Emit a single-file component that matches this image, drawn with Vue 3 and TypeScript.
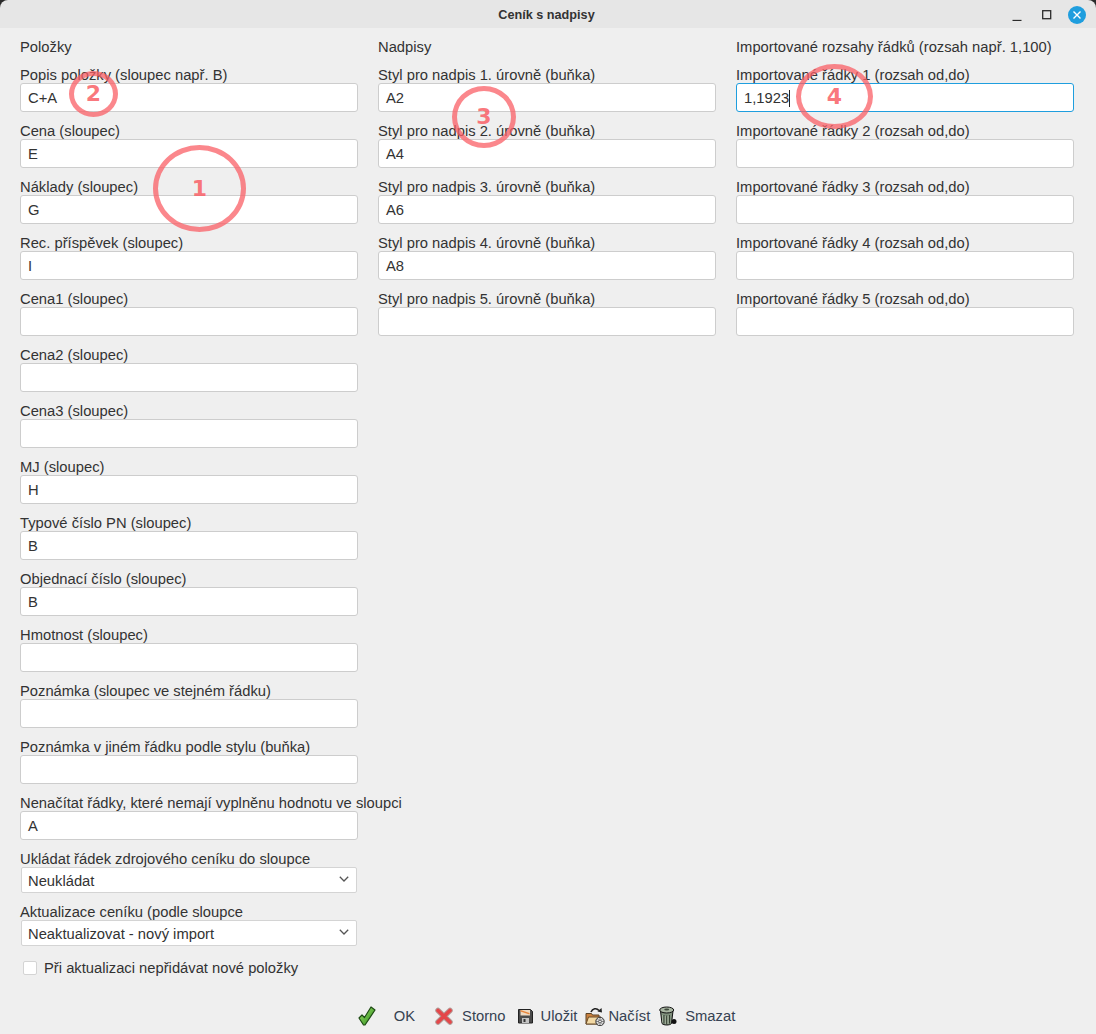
<script setup lang="ts">
const col1: [string, string][] = [
  ['Popis položky (sloupec např. B)', 'C+A'],
  ['Cena (sloupec)', 'E'],
  ['Náklady (sloupec)', 'G'],
  ['Rec. příspěvek (sloupec)', 'I'],
  ['Cena1 (sloupec)', ''],
  ['Cena2 (sloupec)', ''],
  ['Cena3 (sloupec)', ''],
  ['MJ (sloupec)', 'H'],
  ['Typové číslo PN (sloupec)', 'B'],
  ['Objednací číslo (sloupec)', 'B'],
  ['Hmotnost (sloupec)', ''],
  ['Poznámka (sloupec ve stejném řádku)', ''],
  ['Poznámka v jiném řádku podle stylu (buňka)', ''],
  ['Nenačítat řádky, které nemají vyplněnu hodnotu ve sloupci', 'A'],
]
const col2: [string, string][] = [
  ['Styl pro nadpis 1. úrovně (buňka)', 'A2'],
  ['Styl pro nadpis 2. úrovně (buňka)', 'A4'],
  ['Styl pro nadpis 3. úrovně (buňka)', 'A6'],
  ['Styl pro nadpis 4. úrovně (buňka)', 'A8'],
  ['Styl pro nadpis 5. úrovně (buňka)', ''],
]
const col3: [string, string][] = [
  ['Importované řádky 2 (rozsah od,do)', ''],
  ['Importované řádky 3 (rozsah od,do)', ''],
  ['Importované řádky 4 (rozsah od,do)', ''],
  ['Importované řádky 5 (rozsah od,do)', ''],
]
</script>

<template>
  <div class="window">
    <header class="titlebar">
      <span class="title">Ceník s nadpisy</span>
      <div class="controls">
        <svg class="min" width="12" height="12" viewBox="0 0 12 12"><path d="M1.500 11.500h9" stroke="#2b2b2b" stroke-width="1.300" /></svg>
        <svg width="12" height="12" viewBox="0 0 12 12"><rect x="1.700" y="1.700" width="8" height="8" fill="none" stroke="#2b2b2b" stroke-width="1.300" /></svg>
        <svg width="18" height="18" viewBox="0 0 18 18"><circle cx="9" cy="9" r="9" fill="#1f9ede" /><path d="M5.500 5.500l7 7M12.500 5.500l-7 7" stroke="#fff" stroke-width="1.400" /></svg>
      </div>
    </header>

    <main class="columns">
      <section class="col">
        <h2 class="head">Položky</h2>
        <div v-for="f in col1" :key="f[0]" class="field">
          <label class="label">{{ f[0] }}</label>
          <div class="input">{{ f[1] }}</div>
        </div>
        <div class="field sel-field">
          <label class="label">Ukládat řádek zdrojového ceníku do sloupce</label>
          <div class="select">
            <span>Neukládat</span>
            <svg width="10" height="6" viewBox="0 0 10 6"><path d="M.8.8L5 5l4.200-4.200" fill="none" stroke="#555" stroke-width="1.300" /></svg>
          </div>
        </div>
        <div class="field sel-field">
          <label class="label">Aktualizace ceníku (podle sloupce</label>
          <div class="select">
            <span>Neaktualizovat - nový import</span>
            <svg width="10" height="6" viewBox="0 0 10 6"><path d="M.8.8L5 5l4.200-4.200" fill="none" stroke="#555" stroke-width="1.300" /></svg>
          </div>
        </div>
        <div class="check">
          <span class="box"></span>
          <span>Při aktualizaci nepřidávat nové položky</span>
        </div>
      </section>

      <section class="col">
        <h2 class="head">Nadpisy</h2>
        <div v-for="f in col2" :key="f[0]" class="field">
          <label class="label">{{ f[0] }}</label>
          <div class="input">{{ f[1] }}</div>
        </div>
      </section>

      <section class="col">
        <h2 class="head">Importované rozsahy řádků (rozsah např. 1,100)</h2>
        <div class="field">
          <label class="label">Importované řádky 1 (rozsah od,do)</label>
          <div class="input focus">1,1923<i class="caret"></i></div>
        </div>
        <div v-for="f in col3" :key="f[0]" class="field">
          <label class="label">{{ f[0] }}</label>
          <div class="input">{{ f[1] }}</div>
        </div>
      </section>
    </main>

    <footer class="footer">
      <button class="btn b-ok">
        <svg class="ico" width="20" height="20" viewBox="0 0 20 20">
          <defs><linearGradient id="gk" x1="0" y1="0" x2="1" y2="1"><stop offset="0" stop-color="#a6e36e" /><stop offset="1" stop-color="#258a17" /></linearGradient></defs>
          <path d="M1 12l3-3 2.500 2.500L13 1l4 3L7 19h-1.500z" fill="url(#gk)" stroke="#1d4a14" stroke-width="1.200" stroke-linejoin="round" />
        </svg>
        <span>OK</span>
      </button>
      <button class="btn b-no">
        <svg class="ico" width="18" height="18" viewBox="0 0 18 18">
          <path d="M3 3.500l12 11.500M15 3.500L3 15" fill="none" stroke="#b49a96" stroke-width="5.500" stroke-linecap="round" />
          <path d="M3 3.500l12 11.500M15 3.500L3 15" fill="none" stroke="#e4474a" stroke-width="3.600" stroke-linecap="round" />
        </svg>
        <span>Storno</span>
      </button>
      <button class="btn b-save">
        <svg class="ico" width="15" height="16" viewBox="0 0 15 16">
          <path d="M.5 1.500h12l2 2v11.500H.5z" fill="#4b4b4b" stroke="#222" />
          <path d="M2.500 2h9.500v5.500H2.500z" fill="#ecd9c2" />
          <path d="M2.500 2l9 3v1.500l-9-3z" fill="#e8853a" />
          <path d="M4 10h7v5H4z" fill="#c4c4c4" />
          <path d="M5.500 11h2v3h-2z" fill="#333" />
        </svg>
        <span>Uložit</span>
      </button>
      <button class="btn b-load">
        <svg class="ico" width="20" height="20" viewBox="0 0 20 20">
          <path d="M1 7.500h5.500l1 1.500h6.500v9H1z" fill="#c9803e" stroke="#5a4326" />
          <path d="M1 18l2.500-7H16l-2 7z" fill="#f3d9a4" stroke="#6a4d2a" />
          <path d="M6 6c1.500-3.500 5.500-4.500 8-1.500" fill="none" stroke="#222" stroke-width="1.600" />
          <path d="M12.500 5.500l4.500 1-.5-4.500z" fill="#222" />
          <circle cx="15" cy="15.500" r="4.200" fill="#e6e6e6" stroke="#333" />
          <path d="M12.200 12.700l5.600 5.600M17.800 12.700l-5.600 5.600M15 11.500v8M11 15.500h8" stroke="#555" stroke-width=".7" />
          <circle cx="15" cy="15.500" r="1.300" fill="#fff" stroke="#333" stroke-width=".6" />
        </svg>
        <span>Načíst</span>
      </button>
      <button class="btn b-del">
        <svg class="ico" width="18" height="20" viewBox="0 0 18 20">
          <path d="M1.500 5l1.500 12.500c1.500 2 8 2 9.500 0L14 5z" fill="#7f8f7c" stroke="#111" />
          <ellipse cx="7.700" cy="4" rx="7" ry="3" fill="#a9b6a3" stroke="#111" />
          <ellipse cx="7.700" cy="3.500" rx="2.500" ry="1" fill="#3f4a3d" />
          <path d="M5 9v8.500M7.700 9.500v9M10.500 9v8.500" stroke="#343e32" />
          <path d="M3.500 9v7.500M6.300 10v8M9 10v8" stroke="#b4c1ad" stroke-width=".7" />
          <circle cx="15" cy="15.500" r="2.500" fill="#111" />
        </svg>
        <span>Smazat</span>
      </button>
    </footer>

    <div class="mark m1"><span>1</span></div>
    <div class="mark m2"><span>2</span></div>
    <div class="mark m3"><span>3</span></div>
    <div class="mark m4"><span>4</span></div>
  </div>
</template>

<style>
html, body { margin: 0; background: #efefef; }
</style>

<style scoped>
.window {
  position: relative;
  width: 1096px;
  height: 1034px;
  overflow: hidden;
  display: flex;
  flex-direction: column;
  background: #2a2a2a;
  color: #333;
  font: 14.75px/16px "Liberation Sans", Arial, sans-serif;
}
.titlebar {
  position: relative;
  flex: none;
  height: 28px;
  padding-top: 1px;
  box-sizing: border-box;
  background: #e6e6e6;
  border-radius: 8px 8px 0 0;
  display: flex;
  align-items: center;
  justify-content: center;
}
.title { font-size: 12.67px; font-weight: bold; color: #333; margin-left: -3px; }
.controls {
  position: absolute;
  right: 10px;
  top: 6px;
  display: flex;
  align-items: center;
  gap: 15px;
}
.min { margin-right: 3px; }
.columns {
  flex: 1;
  display: grid;
  grid-template-columns: repeat(3, 338px);
  grid-auto-rows: min-content;
  column-gap: 20px;
  padding: 11px 22px 0 20px;
  background: #efefef;
}
.col { display: flex; flex-direction: column; }
.head {
  margin: 0 0 8px;
  font: inherit;
  height: 17px;
  white-space: nowrap;
}
.field { height: 56px; display: flex; flex-direction: column; }
.label { height: 16px; margin-top: 3px; line-height: 16px; white-space: nowrap; }
.input {
  box-sizing: border-box;
  height: 29px;
  border: 1px solid #cdcdcd;
  border-radius: 3px;
  background: #fff;
  padding: 1px 7px 0;
  line-height: 27px;
  color: #333;
}
.input.focus { border-color: #1f9ede; }
.caret {
  display: inline-block;
  width: 1px;
  height: 17px;
  background: #222;
  vertical-align: -4px;
}
.sel-field { height: 53px; }
.select {
  box-sizing: border-box;
  margin: 0 1px;
  height: 26px;
  border: 1px solid #d4d4d4;
  border-radius: 2px;
  background: #fff;
  padding: 1px 6px 0;
  display: flex;
  align-items: center;
  justify-content: space-between;
}
.select svg { margin-right: 1px; margin-top: -3px; }
.check {
  margin: 5px 0 0 3px;
  display: flex;
  align-items: center;
  gap: 7px;
  height: 18px;
}
.box {
  box-sizing: border-box;
  width: 14px;
  height: 14px;
  background: #fff;
  border: 1px solid #d4d4d4;
  border-radius: 2px;
}
.footer {
  position: absolute;
  left: 0;
  right: 0;
  bottom: 4px;
  height: 28px;
  display: flex;
  align-items: center;
  justify-content: center;
  padding-right: 3px;
}
.btn {
  padding: 0;
  border: 0;
  background: none;
  font: inherit;
  color: #364252;
  display: flex;
  align-items: center;
  gap: 8px;
}
.ico { flex: none; }
.b-ok { gap: 16px; }
.b-no { margin-left: 20px; gap: 9px; }
.b-save { margin-left: 12px; }
.b-load { margin-left: 8px; gap: 3px; }
.b-del { margin-left: 9px; }
.mark {
  position: absolute;
  box-sizing: border-box;
  border: 5px solid rgba(250, 95, 102, 0.75);
  border-radius: 50%;
  display: flex;
  align-items: center;
  justify-content: center;
  color: rgba(249, 95, 102, 0.85);
  font: bold 22px/1 "DejaVu Sans", sans-serif;
}
.m1 { left: 153px; top: 145px; width: 93px; height: 87px; }
.m2 { left: 69px; top: 71px; width: 49px; height: 46px; }
.m3 { left: 452px; top: 86px; width: 64px; height: 62px; }
.m4 { left: 796px; top: 64px; width: 77px; height: 65px; }
</style>
